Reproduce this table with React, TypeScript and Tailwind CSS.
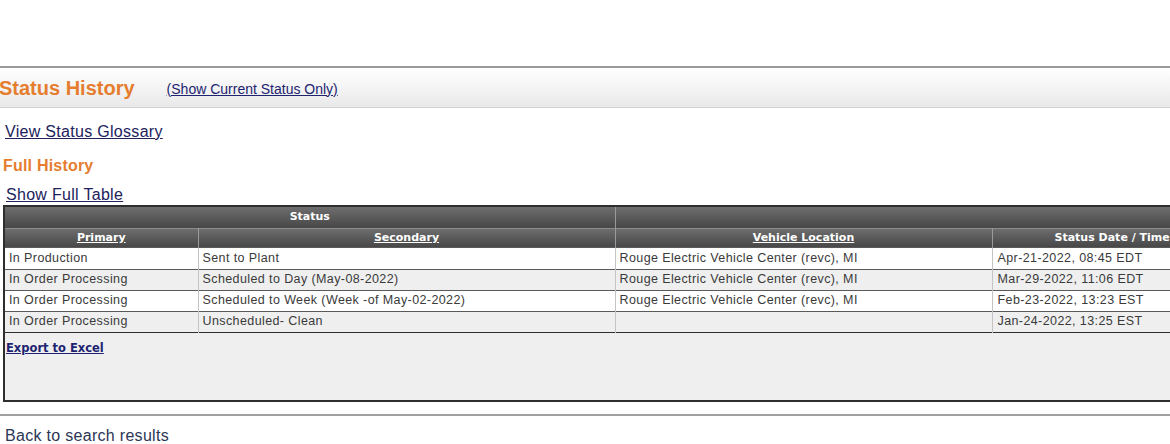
import React from 'react'

// Vehicle order status history panel (legacy dealer portal look)

const rows = [
  { primary: 'In Production', secondary: 'Sent to Plant', location: 'Rouge Electric Vehicle Center (revc), MI', date: 'Apr-21-2022, 08:45 EDT' },
  { primary: 'In Order Processing', secondary: 'Scheduled to Day (May-08-2022)', location: 'Rouge Electric Vehicle Center (revc), MI', date: 'Mar-29-2022, 11:06 EDT' },
  { primary: 'In Order Processing', secondary: 'Scheduled to Week (Week -of May-02-2022)', location: 'Rouge Electric Vehicle Center (revc), MI', date: 'Feb-23-2022, 13:23 EST' },
  { primary: 'In Order Processing', secondary: 'Unscheduled- Clean', location: '', date: 'Jan-24-2022, 13:25 EST' },
]

const headCell =
  "h-[20px] p-0 text-center align-middle text-[11px] font-bold text-white font-['DejaVu_Sans',sans-serif] bg-linear-to-b from-[#6e6e6e] to-[#474747] border-l border-[#9a9a9a]"

export default function App() {
  return (
    <div className="w-[1170px] h-[444px] overflow-hidden bg-white font-['Liberation_Sans',Arial,sans-serif]">
      <div className="h-[66px]" />

      {/* title band */}
      <div className="h-[42px] flex items-center border-t-2 border-b border-t-[#9a9a9a] border-b-[#d2d2d2] bg-linear-to-b from-white to-[#e9e9e9]">
        <span className="ml-[-1px] text-[20px] font-bold text-[#e57d2f]">Status History</span>
        <a className="ml-[32px] mt-[3px] text-[14px] text-[#1e2470] underline">(Show Current Status Only)</a>
      </div>

      <div className="pl-[5px] pt-[13px]">
        <a className="block h-[22px] text-[16px] leading-[22px] tracking-[0.3px] text-[#21225c] underline">View Status Glossary</a>
      </div>
      <div className="pl-[3px] pt-[12px] h-[34px] text-[16px] leading-[22px] font-bold tracking-[0.2px] text-[#e57d2f]">Full History</div>
      <div className="pl-[6px] h-[28px] pt-[9px]">
        <a className="block text-[16px] leading-[18px] tracking-[0.3px] text-[#21225c] underline">Show Full Table</a>
      </div>

      <table className="ml-[3px] w-[1300px] table-fixed border-collapse border-2 border-[#2e2e2e]">
        <colgroup>
          <col className="w-[194px]" />
          <col className="w-[417px]" />
          <col className="w-[377px]" />
          <col className="w-[312px]" />
        </colgroup>
        <thead>
          <tr className="border-b border-[#8c8c8c]">
            <th colSpan={2} className={headCell + ' h-[22px]'}>Status</th>
            <th colSpan={2} className={headCell + ' h-[22px]'}></th>
          </tr>
          <tr>
            <th className={headCell}><span className="underline">Primary</span></th>
            <th className={headCell}><span className="underline">Secondary</span></th>
            <th className={headCell}><span className="underline">Vehicle Location</span></th>
            <th className={headCell + ' text-left'}><span className="ml-[62px]">Status Date / Time</span></th>
          </tr>
        </thead>
        <tbody>
          {rows.map((r, i) => (
            <tr
              key={i}
              className={`h-[21px] border-b ${i === rows.length - 1 ? 'border-[#2e2e2e]' : 'border-[#5a5a5a]'} ${
                i % 2 === 1 ? 'bg-[#efefef]' : 'bg-white'
              } text-[12.5px] tracking-[0.4px] text-[#3a3a3a]`}
            >
              <td className="p-0 pl-[4px] whitespace-nowrap">{r.primary}</td>
              <td className="p-0 pl-[4px] whitespace-nowrap border-l border-[#c4c4c4]">{r.secondary}</td>
              <td className="p-0 pl-[4px] whitespace-nowrap border-l border-[#c4c4c4]">{r.location}</td>
              <td className="p-0 pl-[5px] whitespace-nowrap border-l border-[#c4c4c4]">{r.date}</td>
            </tr>
          ))}
          <tr className="bg-[#efefef]">
            <td colSpan={4} className="h-[69px] p-0 pl-[1px] pt-[2px] align-top">
              <a className="text-[11.5px] font-bold text-[#1e2470] underline font-['DejaVu_Sans',sans-serif]">Export to Excel</a>
            </td>
          </tr>
        </tbody>
      </table>

      <div className="mt-[12px] border-t-2 border-[#a0a0a0]" />
      <div className="pl-[5px] pt-[9px] text-[16px] leading-[22px] tracking-[0.3px] text-[#2b3654]">Back to search results</div>
    </div>
  )
}
